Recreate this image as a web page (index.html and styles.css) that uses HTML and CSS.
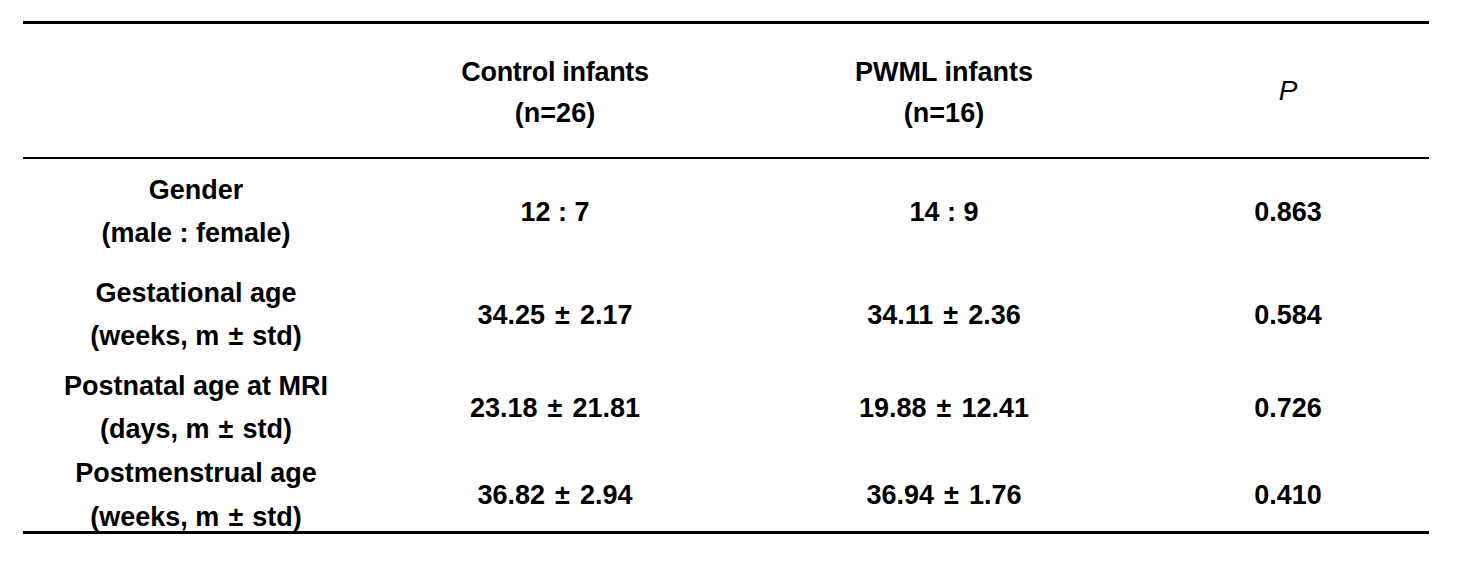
FILE: index.html
```html
<!DOCTYPE html>
<html lang="en">
<head>
<meta charset="utf-8">
<title>Demographics table</title>
<link rel="stylesheet" href="styles.css">
</head>
<body>
<div class="table">
  <div class="row head">
    <div class="cell label"></div>
    <div class="cell"><span class="ctrl">Control infants</span><span>(n=26)</span></div>
    <div class="cell"><span>PWML infants</span><span>(n=16)</span></div>
    <div class="cell"><span class="pval">P</span></div>
  </div>
  <div class="row r1">
    <div class="cell label"><span>Gender</span><span>(male : female)</span></div>
    <div class="cell"><span>12 : 7</span></div>
    <div class="cell"><span>14 : 9</span></div>
    <div class="cell"><span>0.863</span></div>
  </div>
  <div class="row r2">
    <div class="cell label"><span>Gestational age</span><span>(weeks, m<span class="pm">±</span>std)</span></div>
    <div class="cell"><span>34.25<span class="pm">±</span>2.17</span></div>
    <div class="cell"><span>34.11<span class="pm">±</span>2.36</span></div>
    <div class="cell"><span>0.584</span></div>
  </div>
  <div class="row r3">
    <div class="cell label"><span>Postnatal age at MRI</span><span>(days, m<span class="pm">±</span>std)</span></div>
    <div class="cell"><span>23.18<span class="pm">±</span>21.81</span></div>
    <div class="cell"><span>19.88<span class="pm">±</span>12.41</span></div>
    <div class="cell"><span>0.726</span></div>
  </div>
  <div class="row r4">
    <div class="cell label"><span>Postmenstrual age</span><span>(weeks, m<span class="pm">±</span>std)</span></div>
    <div class="cell"><span>36.82<span class="pm">±</span>2.94</span></div>
    <div class="cell"><span>36.94<span class="pm">±</span>1.76</span></div>
    <div class="cell"><span>0.410</span></div>
  </div>
</div>
</body>
</html>
```
FILE: styles.css
```css
html, body {
  margin: 0;
  padding: 0;
  background: #ffffff;
}
body {
  font-family: "Liberation Sans", Arial, sans-serif;
  font-weight: bold;
  font-size: 27px;
  color: #000000;
}
.table {
  margin: 21px 0 0 23px;
  width: 1406px;
  border-top: 3px solid #000;
  border-bottom: 3px solid #000;
}
.row {
  display: grid;
  grid-template-columns: 346px 372px 406px 282px;
}
.cell {
  display: flex;
  flex-direction: column;
  align-items: center;
  justify-content: center;
  text-align: center;
  line-height: 43px;
  white-space: nowrap;
}
.cell > span {
  display: block;
}
.pm {
  display: inline-block;
  margin: 0 10px;
}
.label .pm {
  margin: 0 9px;
}
.ctrl {
  letter-spacing: -0.3px;
}
.head {
  height: 133px;
  border-bottom: 2px solid #000;
}
.head .cell {
  line-height: 41px;
  padding-top: 4px;
}
.head .cell:last-child {
  padding-top: 0;
}
.pval {
  font-style: italic;
  font-weight: normal;
  font-size: 28px;
}
.r1 { height: 106px; }
.r2 { height: 100px; }
.r3 { height: 86px; }
.r4 { height: 80px; }
.r4 .label {
  line-height: 44px;
}
```
